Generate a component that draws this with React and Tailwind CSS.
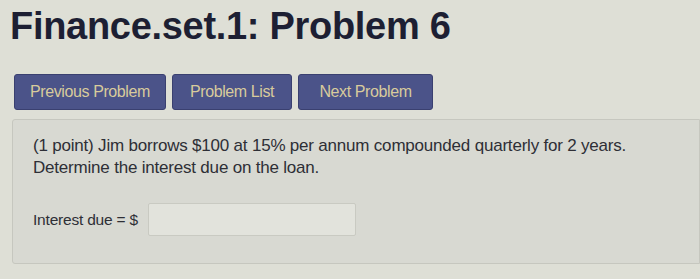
import React from 'react';

const buttons = ['Previous Problem', 'Problem List', 'Next Problem'];

const App = () => {
  return (
    <div className="w-[700px] h-[279px] overflow-hidden bg-[#dedfd6] font-['Liberation_Sans',Arial,sans-serif]">
      <div className="pl-[10px] pt-[5px]">
        <h1 className="text-[38px] leading-[42px] font-bold text-[#1d1f33] tracking-[-0.3px]">Finance.set.1: Problem 6</h1>
      </div>

      <div className="flex gap-[6px] pl-[14px] mt-[27px]">
        {buttons.map((b, i) => (
          <button
            key={b}
            className={`h-[36px] rounded-[3px] bg-[#4b5389] border border-[#3a4070] text-[16px] text-[#d8cb9c] tracking-[-0.4px] ${i === 0 ? 'w-[152px]' : i === 1 ? 'w-[120px]' : 'w-[135px]'}`}
          >
            {b}
          </button>
        ))}
      </div>

      <div className="ml-[12px] mt-[9px] h-[145px] bg-[#d8d9d2] border border-[#c6c7bf] rounded-l-[3px] pl-[20px] pt-[15px]">
        <p className="text-[17px] leading-[22px] text-[#2e2f36] tracking-[-0.2px]">
          (1 point) Jim borrows $100 at 15% per annum compounded quarterly for 2 years.
          <br />
          Determine the interest due on the loan.
        </p>
        <div className="flex items-center mt-[24px]">
          <span className="text-[15.5px] text-[#2e2f36] tracking-[-0.2px]">Interest due = $</span>
          <div className="ml-[10px] w-[208px] h-[33px] border border-[#c9cac2] bg-[#e2e3dc] rounded-[2px]"></div>
        </div>
      </div>
    </div>
  );
};

export default App;
